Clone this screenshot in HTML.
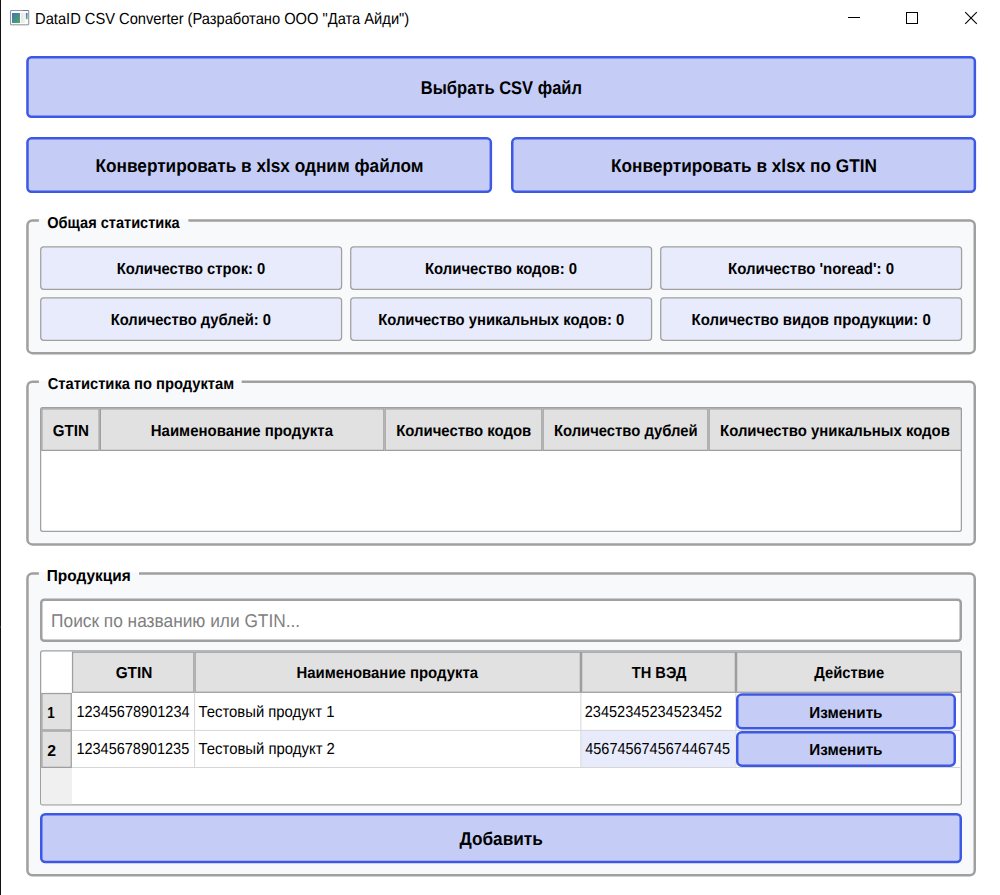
<!DOCTYPE html>
<html lang="ru"><head><meta charset="utf-8"><title>DataID CSV Converter</title>
<style>
html,body{margin:0;padding:0;background:#fff;}
body{width:1000px;height:895px;position:relative;overflow:hidden;font-family:"Liberation Sans",sans-serif;text-rendering:geometricPrecision;}
.t{position:absolute;height:40px;line-height:40px;white-space:nowrap;transform-origin:0 0;}
</style></head><body>
<svg width="1000" height="895" viewBox="0 0 1000 895" style="position:absolute;left:0;top:0"><rect x="0.00" y="0.00" width="1.00" height="895.00" fill="#101010"/>
<rect x="0.00" y="626.00" width="1.00" height="2.00" fill="#4a2c0a"/>
<g>
<defs><linearGradient id="ig" x1="0" y1="0" x2="1" y2="1"><stop offset="0" stop-color="#4b70b4"/><stop offset="0.5" stop-color="#458f8c"/><stop offset="1" stop-color="#55a85a"/></linearGradient>
<linearGradient id="ib" x1="0" y1="0" x2="0" y2="1"><stop offset="0" stop-color="#4b70b4"/><stop offset="1" stop-color="#5cb860"/></linearGradient>
<linearGradient id="ip" x1="0" y1="0" x2="1" y2="0"><stop offset="0" stop-color="#e6e6e6"/><stop offset="1" stop-color="#f6f6f6"/></linearGradient></defs>
<rect x="11" y="25" width="17.5" height="1" fill="#000" fill-opacity="0.05"/>
<rect x="10.5" y="10.5" width="18.2" height="14.2" rx="0.8" fill="#fdfdfe" stroke="#9198a5" stroke-width="1.1"/>
<rect x="22.8" y="10" width="5.6" height="1" fill="#737b89"/>
<rect x="12" y="13" width="8" height="10" fill="url(#ig)"/>
<rect x="21" y="13" width="4.8" height="10" fill="url(#ip)"/>
<rect x="25.9" y="13" width="1.7" height="6.2" fill="url(#ib)"/>
</g>
<g stroke="#000" stroke-width="1" fill="none" shape-rendering="crispEdges"><line x1="848" y1="17.5" x2="860" y2="17.5"/><rect x="906.5" y="12.5" width="11" height="11"/></g>
<g stroke="#000" stroke-width="1.1" fill="none"><line x1="965.2" y1="12.2" x2="976.8" y2="23.8"/><line x1="976.8" y1="12.2" x2="965.2" y2="23.8"/></g>
<rect x="27.45" y="57.25" width="947.40" height="59.50" rx="4" ry="4" fill="#c5cdf7" stroke="#3d58e4" stroke-width="2.5"/>
<rect x="27.45" y="138.35" width="463.40" height="53.40" rx="4" ry="4" fill="#c5cdf7" stroke="#3d58e4" stroke-width="2.5"/>
<rect x="512.25" y="138.35" width="462.60" height="53.40" rx="4" ry="4" fill="#c5cdf7" stroke="#3d58e4" stroke-width="2.5"/>
<rect x="26.20" y="219.20" width="949.80" height="135.20" rx="6.25" ry="6.25" fill="#f8f9fb" stroke="none" stroke-width="0"/>
<path d="M188.40,220.45 L969.75,220.45 A5,5 0 0 1 974.75,225.45 L974.75,348.15 A5,5 0 0 1 969.75,353.15 L32.45,353.15 A5,5 0 0 1 27.45,348.15 L27.45,225.45 A5,5 0 0 1 32.45,220.45 L38.90,220.45" fill="none" stroke="#a0a0a0" stroke-width="2.5"/>
<rect x="26.20" y="380.40" width="949.80" height="165.30" rx="6.25" ry="6.25" fill="#f8f9fb" stroke="none" stroke-width="0"/>
<path d="M241.70,381.65 L969.75,381.65 A5,5 0 0 1 974.75,386.65 L974.75,539.45 A5,5 0 0 1 969.75,544.45 L32.45,544.45 A5,5 0 0 1 27.45,539.45 L27.45,386.65 A5,5 0 0 1 32.45,381.65 L38.90,381.65" fill="none" stroke="#a0a0a0" stroke-width="2.5"/>
<rect x="26.20" y="572.20" width="949.80" height="304.40" rx="6.25" ry="6.25" fill="#f8f9fb" stroke="none" stroke-width="0"/>
<path d="M139.00,573.45 L969.75,573.45 A5,5 0 0 1 974.75,578.45 L974.75,870.35 A5,5 0 0 1 969.75,875.35 L32.45,875.35 A5,5 0 0 1 27.45,870.35 L27.45,578.45 A5,5 0 0 1 32.45,573.45 L38.90,573.45" fill="none" stroke="#a0a0a0" stroke-width="2.5"/>
<rect x="40.73" y="246.82" width="300.85" height="42.55" rx="3" ry="3" fill="#e8ebfb" stroke="#a0a0a0" stroke-width="1.25"/>
<rect x="350.73" y="246.82" width="300.85" height="42.55" rx="3" ry="3" fill="#e8ebfb" stroke="#a0a0a0" stroke-width="1.25"/>
<rect x="660.73" y="246.82" width="300.85" height="42.55" rx="3" ry="3" fill="#e8ebfb" stroke="#a0a0a0" stroke-width="1.25"/>
<rect x="40.73" y="297.82" width="300.85" height="42.55" rx="3" ry="3" fill="#e8ebfb" stroke="#a0a0a0" stroke-width="1.25"/>
<rect x="350.73" y="297.82" width="300.85" height="42.55" rx="3" ry="3" fill="#e8ebfb" stroke="#a0a0a0" stroke-width="1.25"/>
<rect x="660.73" y="297.82" width="300.85" height="42.55" rx="3" ry="3" fill="#e8ebfb" stroke="#a0a0a0" stroke-width="1.25"/>
<rect x="40.62" y="407.62" width="920.75" height="123.75" rx="2" ry="2" fill="#ffffff" stroke="#a0a0a0" stroke-width="1.25"/>
<rect x="41.88" y="408.88" width="57.25" height="41.50" rx="0" ry="0" fill="#e1e1e1" stroke="#9e9e9e" stroke-width="1.25"/>
<rect x="100.38" y="408.88" width="283.50" height="41.50" rx="0" ry="0" fill="#e1e1e1" stroke="#9e9e9e" stroke-width="1.25"/>
<rect x="385.12" y="408.88" width="156.75" height="41.50" rx="0" ry="0" fill="#e1e1e1" stroke="#9e9e9e" stroke-width="1.25"/>
<rect x="543.12" y="408.88" width="164.75" height="41.50" rx="0" ry="0" fill="#e1e1e1" stroke="#9e9e9e" stroke-width="1.25"/>
<rect x="709.12" y="408.88" width="252.25" height="41.50" rx="0" ry="0" fill="#e1e1e1" stroke="#9e9e9e" stroke-width="1.25"/>
<rect x="41.25" y="599.65" width="919.50" height="41.10" rx="3" ry="3" fill="#ffffff" stroke="#a0a0a0" stroke-width="2.5"/>
<rect x="40.62" y="650.92" width="920.75" height="153.85" rx="2" ry="2" fill="#ffffff" stroke="#a0a0a0" stroke-width="1.25"/>
<rect x="41.25" y="768.00" width="30.65" height="36.15" fill="#f0f0f0"/>
<rect x="581.20" y="731.00" width="154.20" height="36.00" fill="#e8ebfb"/>
<rect x="194.10" y="693.00" width="1.00" height="74.90" fill="#d6d6d6"/>
<rect x="580.40" y="693.00" width="1.00" height="74.90" fill="#d6d6d6"/>
<rect x="735.40" y="693.00" width="1.00" height="74.90" fill="#d6d6d6"/>
<rect x="72.00" y="729.90" width="888.70" height="1.00" fill="#d6d6d6"/>
<rect x="72.00" y="767.00" width="888.70" height="1.00" fill="#d6d6d6"/>
<rect x="72.53" y="652.17" width="121.35" height="40.10" rx="0" ry="0" fill="#e1e1e1" stroke="#9e9e9e" stroke-width="1.25"/>
<rect x="195.12" y="652.17" width="385.25" height="40.10" rx="0" ry="0" fill="#e1e1e1" stroke="#9e9e9e" stroke-width="1.25"/>
<rect x="581.62" y="652.17" width="153.75" height="40.10" rx="0" ry="0" fill="#e1e1e1" stroke="#9e9e9e" stroke-width="1.25"/>
<rect x="736.62" y="652.17" width="224.35" height="40.10" rx="0" ry="0" fill="#e1e1e1" stroke="#9e9e9e" stroke-width="1.25"/>
<rect x="41.88" y="693.52" width="29.40" height="36.45" rx="0" ry="0" fill="#e1e1e1" stroke="#9e9e9e" stroke-width="1.25"/>
<rect x="41.88" y="731.02" width="29.40" height="36.35" rx="0" ry="0" fill="#e1e1e1" stroke="#9e9e9e" stroke-width="1.25"/>
<rect x="737.25" y="694.45" width="217.50" height="33.70" rx="4.5" ry="4.5" fill="#c5cdf7" stroke="#3d58e4" stroke-width="2.5"/>
<rect x="737.25" y="732.35" width="217.50" height="33.30" rx="4.5" ry="4.5" fill="#c5cdf7" stroke="#3d58e4" stroke-width="2.5"/>
<rect x="41.25" y="814.25" width="919.50" height="47.70" rx="4" ry="4" fill="#c5cdf7" stroke="#3d58e4" stroke-width="2.5"/></svg>
<div class="t" id="title" style="left:35px;top:0px;font-size:16.0px;font-weight:400;color:#000;transform:translateX(0.06px) scaleX(0.9175)">DataID CSV Converter (Разработано ООО &quot;Дата Айди&quot;)</div>
<div class="t" id="b1" style="left:420px;top:68px;font-size:18.4px;font-weight:700;color:#000;transform:translateX(0.83px) scaleX(0.8978)">Выбрать CSV файл</div>
<div class="t" id="b2" style="left:95px;top:146px;font-size:18.4px;font-weight:700;color:#000;transform:translateX(0.48px) scaleX(0.9369)">Конвертировать в xlsx одним файлом</div>
<div class="t" id="b3" style="left:611px;top:146px;font-size:18.4px;font-weight:700;color:#000;transform:translateX(0.09px) scaleX(0.9357)">Конвертировать в xlsx по GTIN</div>
<div class="t" id="g1" style="left:47px;top:204px;font-size:15.9px;font-weight:700;color:#000;transform:translateX(0.27px) scaleX(0.9162)">Общая статистика</div>
<div class="t" id="g2" style="left:47px;top:365px;font-size:15.9px;font-weight:700;color:#000;transform:translateX(0.67px) scaleX(0.9264)">Статистика по продуктам</div>
<div class="t" id="g3" style="left:46px;top:557px;font-size:15.9px;font-weight:700;color:#000;transform:translateX(0.75px) scaleX(0.9704)">Продукция</div>
<div class="t" id="s1" style="left:116px;top:250px;font-size:15.9px;font-weight:700;color:#000;transform:translateX(0.70px) scaleX(0.9315)">Количество строк: 0</div>
<div class="t" id="s2" style="left:424px;top:250px;font-size:15.9px;font-weight:700;color:#000;transform:translateX(0.99px) scaleX(0.9368)">Количество кодов: 0</div>
<div class="t" id="s3" style="left:727px;top:250px;font-size:15.9px;font-weight:700;color:#000;transform:translateX(0.98px) scaleX(0.9431)">Количество &#x27;noread&#x27;: 0</div>
<div class="t" id="s4" style="left:110px;top:301px;font-size:15.9px;font-weight:700;color:#000;transform:translateX(0.70px) scaleX(0.9285)">Количество дублей: 0</div>
<div class="t" id="s5" style="left:378px;top:301px;font-size:15.9px;font-weight:700;color:#000;transform:translateX(0.19px) scaleX(0.9331)">Количество уникальных кодов: 0</div>
<div class="t" id="s6" style="left:691px;top:301px;font-size:15.9px;font-weight:700;color:#000;transform:translateX(0.59px) scaleX(0.9404)">Количество видов продукции: 0</div>
<div class="t" id="h1" style="left:52px;top:412px;font-size:15.9px;font-weight:700;color:#000;transform:translateX(0.65px) scaleX(0.9530)">GTIN</div>
<div class="t" id="h2" style="left:150px;top:412px;font-size:15.9px;font-weight:700;color:#000;transform:translateX(0.78px) scaleX(0.9415)">Наименование продукта</div>
<div class="t" id="h3" style="left:396px;top:412px;font-size:15.9px;font-weight:700;color:#000;transform:translateX(0.19px) scaleX(0.9390)">Количество кодов</div>
<div class="t" id="h4" style="left:553px;top:412px;font-size:15.9px;font-weight:700;color:#000;transform:translateX(0.90px) scaleX(0.9327)">Количество дублей</div>
<div class="t" id="h5" style="left:720px;top:412px;font-size:15.9px;font-weight:700;color:#000;transform:translateX(0.09px) scaleX(0.9373)">Количество уникальных кодов</div>
<div class="t" id="ph" style="left:51px;top:601px;font-size:18.6px;font-weight:400;color:#808080;transform:translateX(0.07px) scaleX(0.9305)">Поиск по названию или GTIN...</div>
<div class="t" id="p1" style="left:115px;top:654px;font-size:15.9px;font-weight:700;color:#000;transform:translateX(0.64px) scaleX(0.9696)">GTIN</div>
<div class="t" id="p2" style="left:296px;top:654px;font-size:15.9px;font-weight:700;color:#000;transform:translateX(0.39px) scaleX(0.9389)">Наименование продукта</div>
<div class="t" id="p3" style="left:631px;top:654px;font-size:15.9px;font-weight:700;color:#000;transform:translateX(0.77px) scaleX(0.9201)">ТН ВЭД</div>
<div class="t" id="p4" style="left:814px;top:654px;font-size:15.9px;font-weight:700;color:#000;transform:translateX(0.30px) scaleX(0.9293)">Действие</div>
<div class="t" id="r1" style="left:47px;top:694px;font-size:15.9px;font-weight:700;color:#000;transform:translateX(0.25px) scaleX(0.8436)">1</div>
<div class="t" id="r2" style="left:47px;top:732px;font-size:15.9px;font-weight:700;color:#000;transform:translateX(0.23px) scaleX(0.9942)">2</div>
<div class="t" id="c11" style="left:76px;top:693px;font-size:16.0px;font-weight:400;color:#000;transform:translateX(0.43px) scaleX(0.9080)">12345678901234</div>
<div class="t" id="c12" style="left:198px;top:693px;font-size:16.0px;font-weight:400;color:#000;transform:translateX(0.52px) scaleX(0.9278)">Тестовый продукт 1</div>
<div class="t" id="c13" style="left:584px;top:693px;font-size:16.0px;font-weight:400;color:#000;transform:translateX(0.75px) scaleX(0.9083)">23452345234523452</div>
<div class="t" id="c21" style="left:76px;top:730px;font-size:16.0px;font-weight:400;color:#000;transform:translateX(0.44px) scaleX(0.9053)">12345678901235</div>
<div class="t" id="c22" style="left:198px;top:730px;font-size:16.0px;font-weight:400;color:#000;transform:translateX(0.52px) scaleX(0.9308)">Тестовый продукт 2</div>
<div class="t" id="c23" style="left:585px;top:730px;font-size:16.0px;font-weight:400;color:#000;transform:translateX(0.25px) scaleX(0.9042)">456745674567446745</div>
<div class="t" id="e1" style="left:809px;top:694px;font-size:15.9px;font-weight:700;color:#000;transform:translateX(0.27px) scaleX(0.9577)">Изменить</div>
<div class="t" id="e2" style="left:809px;top:731px;font-size:15.9px;font-weight:700;color:#000;transform:translateX(0.27px) scaleX(0.9577)">Изменить</div>
<div class="t" id="add" style="left:459px;top:819px;font-size:18.4px;font-weight:700;color:#000;transform:translateX(0.47px) scaleX(0.9364)">Добавить</div>
</body></html>
